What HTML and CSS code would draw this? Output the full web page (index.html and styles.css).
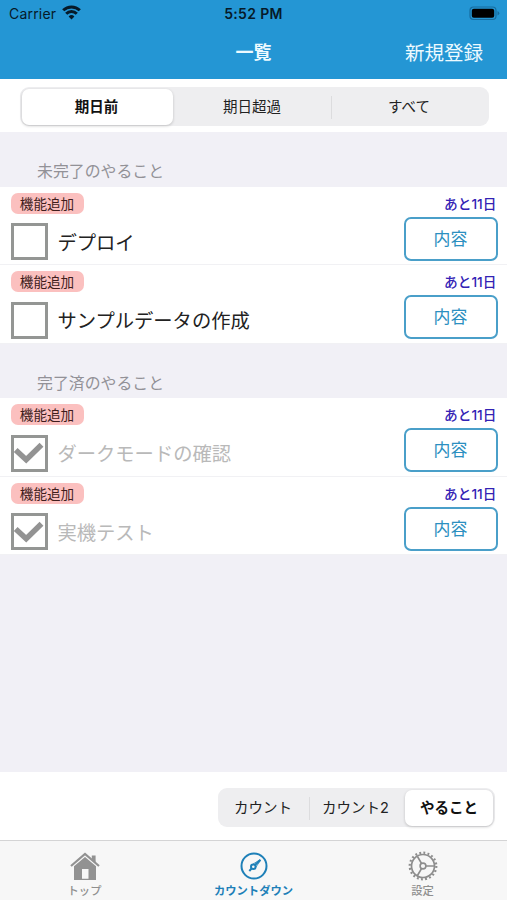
FILE: index.html
```html
<!DOCTYPE html>
<html lang="ja">
<head>
<meta charset="utf-8">
<title>一覧</title>
<link rel="stylesheet" href="styles.css">
</head>
<body>
<div class="app">
  <header class="header">
    <div class="status">
      <div class="carrier"><span>Carrier</span>
        <svg width="19" height="15" viewBox="0 0 19 15" fill="none" stroke="#061a29" stroke-width="3"><path d="M1.2 5.3a11.8 11.8 0 0 1 16.6 0M4.2 8.8a7.5 7.5 0 0 1 10.6 0"/><path d="M9.5 14.4 6.6 11.4a4.1 4.1 0 0 1 5.8 0z" fill="#061a29" stroke="none"/></svg>
      </div>
      <span class="clock">5:52 PM</span>
      <svg class="battery" width="31" height="15" viewBox="0 0 31 15"><rect x="1" y="1" width="26" height="12.5" rx="3.5" fill="none" stroke="#176d9f" stroke-width="1.2"/><rect x="2.8" y="2.8" width="22.4" height="9" rx="2" fill="#000"/><path d="M28.5 5v4.500q1.800-.7 1.800-2.250T28.500 5" fill="#176d9f"/></svg>
    </div>
    <div class="nav"><h1>一覧</h1><span class="new">新規登録</span></div>
  </header>
  <div class="filter">
    <div class="segments wide"><span class="on">期日前</span><span>期日超過</span><span class="line">すべて</span></div>
  </div>
  <main class="list">
    <h2>未完了のやること</h2>
    <div class="row"><div class="meta"><span class="tag">機能追加</span><span class="days">あと11日</span></div><div class="task"><span class="box"></span><span class="name">デプロイ</span><span class="detail">内容</span></div></div>
    <div class="row"><div class="meta"><span class="tag">機能追加</span><span class="days">あと11日</span></div><div class="task"><span class="box"></span><span class="name">サンプルデータの作成</span><span class="detail">内容</span></div></div>
    <h2>完了済のやること</h2>
    <div class="row done"><div class="meta"><span class="tag">機能追加</span><span class="days">あと11日</span></div><div class="task"><span class="box"><svg width="32" height="32" viewBox="0 0 32 32" fill="none" stroke="#939393" stroke-width="5.500"><path d="M2.700 13 13.200 22.800 28.500 7.800"/></svg></span><span class="name">ダークモードの確認</span><span class="detail">内容</span></div></div>
    <div class="row done"><div class="meta"><span class="tag">機能追加</span><span class="days">あと11日</span></div><div class="task"><span class="box"><svg width="32" height="32" viewBox="0 0 32 32" fill="none" stroke="#939393" stroke-width="5.500"><path d="M2.700 13 13.200 22.800 28.500 7.800"/></svg></span><span class="name">実機テスト</span><span class="detail">内容</span></div></div>
  </main>
  <div class="modes">
    <div class="segments narrow"><span>カウント</span><span class="line">カウント2</span><span class="on">やること</span></div>
  </div>
  <nav class="tabs">
    <div class="tab">
      <svg width="32" height="30" viewBox="0 0 32 30"><path d="M2 15 16 3 30 15" fill="none" stroke="#929292" stroke-width="2.200"/><path d="M22.800 4.500h3.800v7.500l-3.800-3.300z" fill="#929292"/><path fill-rule="evenodd" d="M5 15.200 16 6l11 9.200V29H5zM13 18v9.800h6.500V18z" fill="#929292"/></svg>
      <span>トップ</span>
    </div>
    <div class="tab active">
      <svg width="30" height="30" viewBox="0 0 30 30" fill="none" stroke="#1e80b8" stroke-width="2"><circle cx="15" cy="15" r="12.500"/><circle cx="14.300" cy="15.700" r="2.300"/><path d="M16 14 21.500 8.700M12.700 17.300 10.300 20"/><path d="M13.500 13.400 20.500 9M16.600 16.500l4.500-6.500" stroke-width=".8"/></svg>
      <span>カウントダウン</span>
    </div>
    <div class="tab">
      <svg width="30" height="30" viewBox="0 0 30 30" fill="none" stroke="#8d8d8d"><circle cx="15" cy="15" r="13.300" stroke-width="2.200" stroke-dasharray="1.900 2.278"/><circle cx="15" cy="15" r="11.500" stroke-width="1.700"/><circle cx="15" cy="15" r="2.900" stroke-width="1.600"/><path d="M18 15h8.500M13.500 12.400 9.300 5.200M13.500 17.600 9.300 24.800" stroke-width="1.700"/></svg>
      <span>設定</span>
    </div>
  </nav>
</div>
</body>
</html>
```

FILE: styles.css
```css
* { box-sizing: border-box; }
body { margin: 0; font-family: Inter, "Noto Sans CJK JP", sans-serif; color: #222; }
.app { width: 507px; height: 900px; display: flex; flex-direction: column; background: #f1f0f6; overflow: hidden; }
.header { height: 79px; background: #2496d4; flex: none; }
.status { height: 27px; display: grid; grid-template-columns: 1fr auto 1fr; align-items: center; padding: 0 7px 0 9px; color: #061a29; font-size: 14px; line-height: 27px; }
.carrier { display: flex; align-items: center; gap: 6px; letter-spacing: .2px; }
.carrier svg { margin-top: -3px; }
.clock { font-weight: 600; letter-spacing: .35px; margin-right: 2px; }
.battery { justify-self: end; margin-top: -1px; }
.nav { height: 50px; display: grid; grid-template-columns: 1fr auto 1fr; align-items: center; padding: 0 24px; color: #edfaff; }
h1 { grid-column: 2; margin: 0; font-size: 18px; line-height: 52px; font-weight: 700; }
.new { justify-self: end; font-size: 19.5px; line-height: 52px; }
.filter { height: 53px; padding: 8px 18px 0 20px; background: #fff; flex: none; }
.segments { display: grid; height: 39px; background: #eeeef0; border-radius: 9px; padding: 2px; font-size: 14.5px; font-weight: 400; line-height: 36px; text-align: center; }
.wide { grid-template-columns: 151px 158px 1fr; }
.wide .on { text-indent: -2px; }
.segments .on { background: #fff; border-radius: 7px; font-weight: 700; color: #111; box-shadow: 0 1px 3px #0003; }
.segments .line { background: linear-gradient(#dcdcde, #dcdcde) 0 center / 1px 23px no-repeat; }
.list { flex: 1; }
h2 { margin: 0; height: 54.5px; padding: 23px 37px 0; font-size: 15.9px; line-height: 33px; font-weight: 400; color: #929197; }
.row { height: 78.5px; padding: 6px 9.500px 0 10.500px; background: #fff; border-bottom: 1px solid #f1f1f4; }
.meta { display: flex; justify-content: space-between; height: 21px; line-height: 22px; }
.tag { width: 73px; height: 21px; background: #fbc0bf; border-radius: 7px; text-align: center; font-size: 13.6px; font-weight: 400; color: #401d1c; }
.days { font-size: 13.7px; font-weight: 500; color: #3323b5; margin-right: 1px; }
.task { display: flex; align-items: center; height: 51px; }
.box { width: 37px; height: 37px; border: 2.600px solid #949694; margin-top: 5px; border-width: 3px; }
.box svg { display: block; margin: -.5px; }
.name { flex: 1; margin-left: 10px; font-size: 19.3px; line-height: 30px; margin-top: 7px; }
.done .name { color: #b9b9b9; }
.detail { width: 94px; height: 44px; margin-top: -1px; border: 2px solid #4a9fc9; border-radius: 7px; text-align: center; font-size: 16.9px; line-height: 41px; color: #2c8fc0; }
.modes { height: 68px; padding: 16px 12px 0 218px; background: #fff; flex: none; }
.narrow { grid-template-columns: 89px 96px 1fr; border-radius: 9px; }
.narrow span:not(.on) { text-indent: -3px; }
.tabs { height: 60px; flex: none; display: grid; grid-template-columns: repeat(3, 1fr); border-top: 1px solid #d4d4d5; background: #f7f7f7; }
.tab { display: flex; flex-direction: column; align-items: center; padding-top: 10px; color: #8f8f8f; font-size: 11.3px; font-weight: 500; line-height: 16px; }
.tab svg { flex: none; height: 30px; }
.tab span { margin-top: 2px; }
.active { color: #1e80b8; font-weight: 700; }
```
